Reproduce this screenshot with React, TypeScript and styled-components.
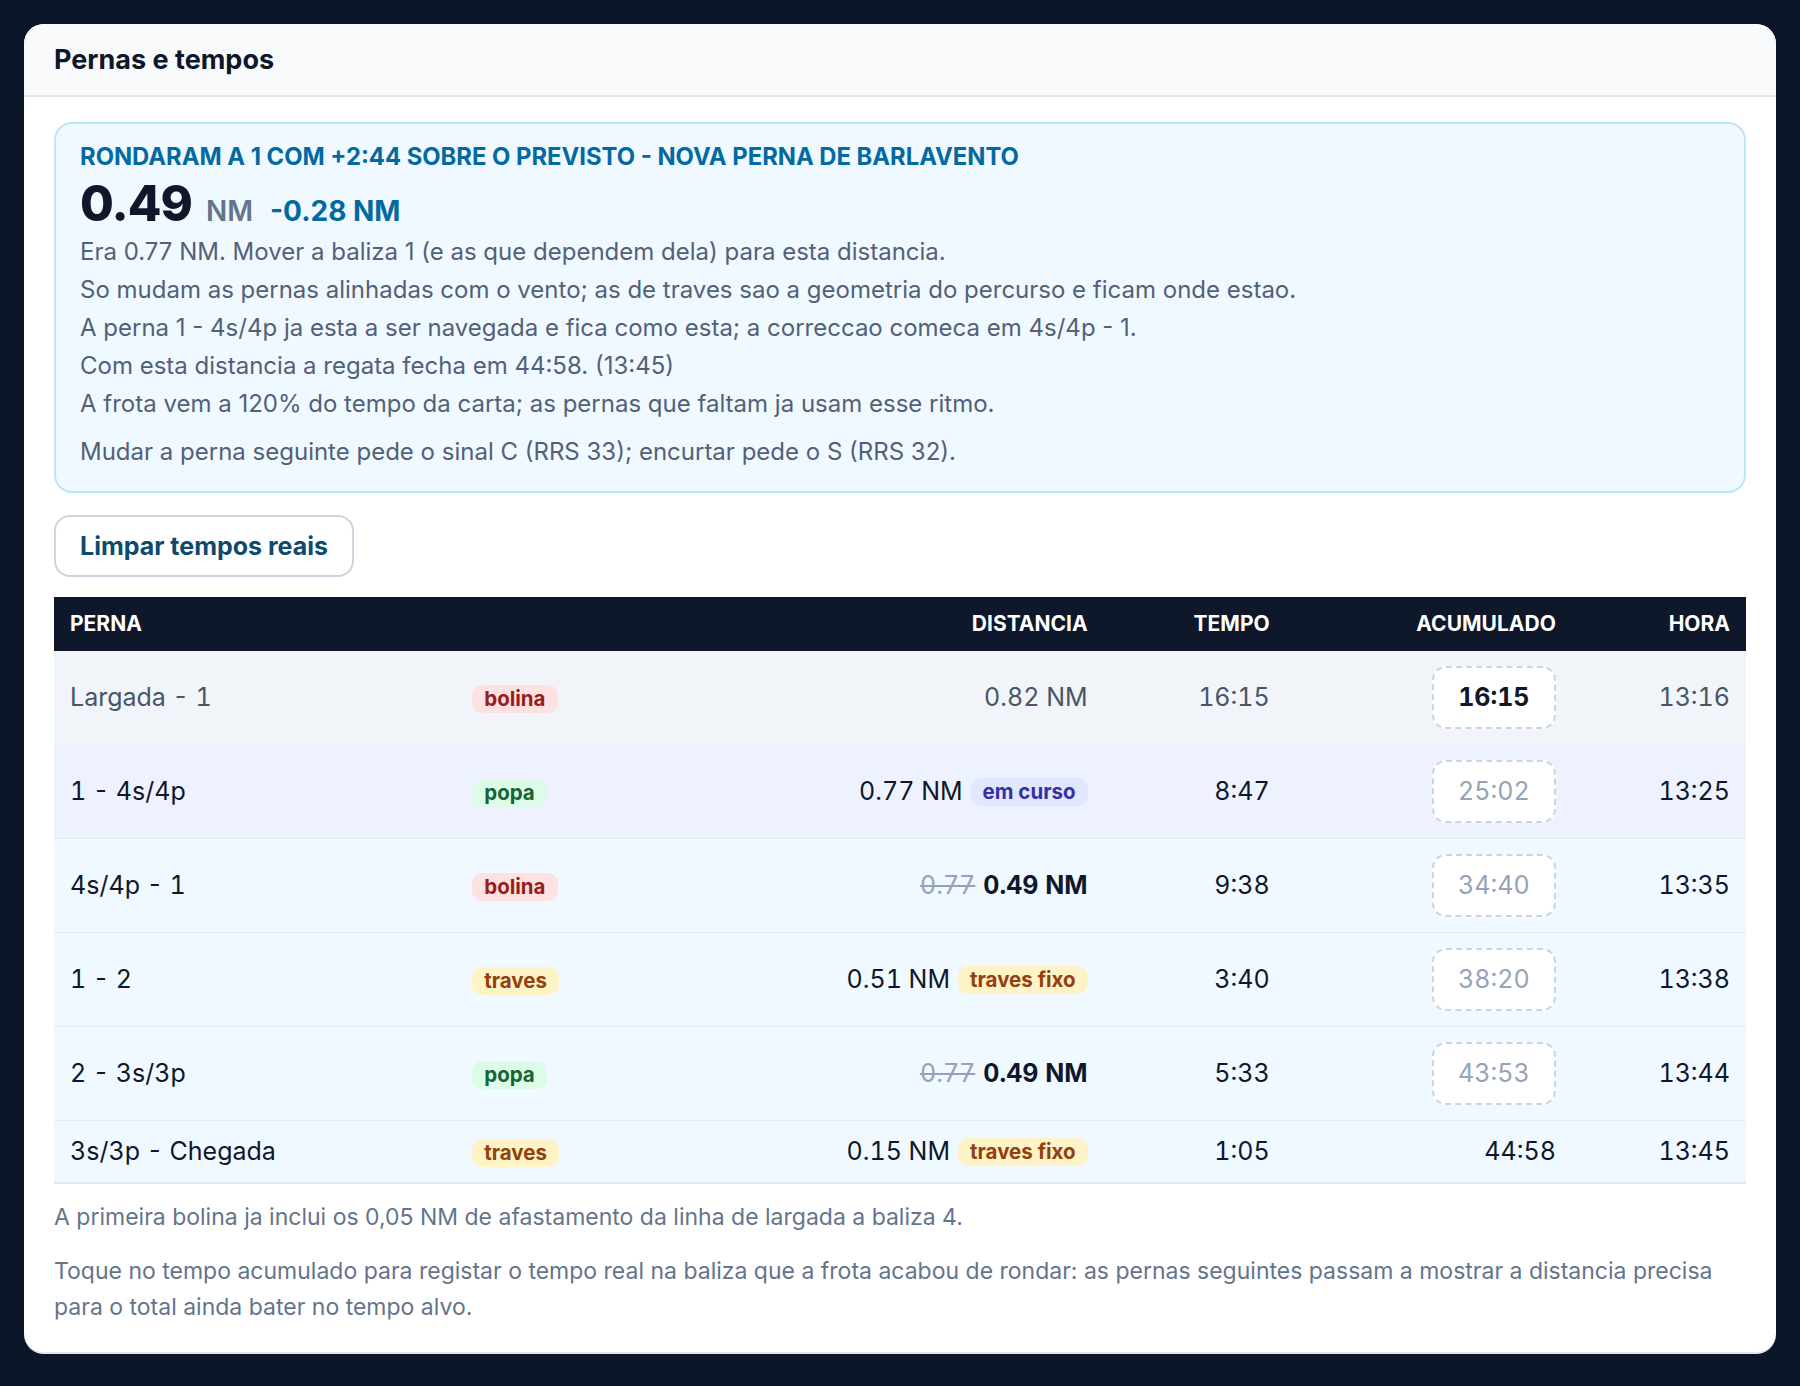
import React from 'react';
import styled, { createGlobalStyle } from 'styled-components';

const GlobalStyle = createGlobalStyle`
  * { box-sizing: border-box; }
  html, body {
    margin: 0;
    padding: 0;
    background: #0b1629;
  }
  body {
    font-family: Inter, "Noto Sans", sans-serif;
    color: #0f172a;
  }
`;

type Kind = 'bolina' | 'popa' | 'traves' | 'curso';

const tagColors: Record<Kind, { bg: string; fg: string }> = {
  bolina: { bg: '#fee2e2', fg: '#991b1b' },
  popa: { bg: '#dcfce7', fg: '#166534' },
  traves: { bg: '#fef3c7', fg: '#92400e' },
  curso: { bg: '#e0e7ff', fg: '#3730a3' },
};

type Leg = {
  name: string;
  kind: Kind;
  dist: string;
  oldDist?: string;
  note?: { text: string; kind: Kind };
  tempo: string;
  acc: string;
  hora: string;
  state: 'done' | 'current' | 'next';
  real?: boolean;
  last?: boolean;
};

const legs: Leg[] = [
  { name: 'Largada - 1', kind: 'bolina', dist: '0.82 NM', tempo: '16:15', acc: '16:15', hora: '13:16', state: 'done', real: true },
  { name: '1 - 4s/4p', kind: 'popa', dist: '0.77 NM', note: { text: 'em curso', kind: 'curso' }, tempo: '8:47', acc: '25:02', hora: '13:25', state: 'current' },
  { name: '4s/4p - 1', kind: 'bolina', dist: '0.49 NM', oldDist: '0.77', tempo: '9:38', acc: '34:40', hora: '13:35', state: 'next' },
  { name: '1 - 2', kind: 'traves', dist: '0.51 NM', note: { text: 'traves fixo', kind: 'traves' }, tempo: '3:40', acc: '38:20', hora: '13:38', state: 'next' },
  { name: '2 - 3s/3p', kind: 'popa', dist: '0.49 NM', oldDist: '0.77', tempo: '5:33', acc: '43:53', hora: '13:44', state: 'next' },
  { name: '3s/3p - Chegada', kind: 'traves', dist: '0.15 NM', note: { text: 'traves fixo', kind: 'traves' }, tempo: '1:05', acc: '44:58', hora: '13:45', state: 'next', last: true },
];

const rowBg = { done: '#f1f5f9', current: '#eef2ff', next: '#f0f9ff' };

const Page = styled.div`
  padding: 24px;
  min-height: 100vh;
`;

const Card = styled.section`
  background: #ffffff;
  border-radius: 20px;
  overflow: hidden;
  border-bottom: 2px solid #e2e8f0;
`;

const CardHeader = styled.header`
  height: 73px;
  padding: 0 30px;
  display: flex;
  align-items: center;
  background: #f8fafc;
  border-bottom: 2px solid #e2e8f0;

  h2 {
    margin: 0;
    font-size: 27px;
    font-weight: 700;
    color: #0f172a;
  }
`;

const CardBody = styled.div`
  padding: 25px 30px 27px;
`;

const Alert = styled.div`
  background: #f0f9ff;
  border: 2px solid #bae6fd;
  border-radius: 18px;
  padding: 18px 24px 20px;
`;

const AlertTitle = styled.div`
  font-size: 23.8px;
  font-weight: 700;
  color: #0369a1;
  text-transform: uppercase;
  line-height: 1.3;
`;

const BigRow = styled.div`
  display: flex;
  align-items: baseline;
  line-height: 1.1;
  margin: 4px 0 2px;
`;

const BigValue = styled.span`
  font-size: 49px;
  font-weight: 800;
  letter-spacing: -0.02em;
  color: #0f172a;
`;

const Unit = styled.span`
  font-size: 28px;
  font-weight: 600;
  color: #64748b;
  margin-left: 14px;
`;

const Delta = styled.span`
  font-size: 28px;
  font-weight: 700;
  color: #0369a1;
  margin-left: 17px;
`;

const AlertLine = styled.p<{ $gap?: boolean }>`
  margin: ${(p) => (p.$gap ? '10px' : '0')} 0 0;
  font-size: 24px;
  line-height: 38px;
  color: #526177;
`;

const ClearButton = styled.button`
  margin-top: 22px;
  height: 62px;
  padding: 0 24px;
  background: #ffffff;
  border: 2px solid #cbd5e1;
  border-radius: 16px;
  font-family: inherit;
  font-size: 25px;
  font-weight: 700;
  color: #0c4a6e;
  cursor: pointer;
`;

const Table = styled.table`
  margin-top: 20px;
  width: 100%;
  border-collapse: collapse;
  table-layout: fixed;
  font-variant-numeric: tabular-nums;
`;

const Col = styled.col<{ $w: number }>`
  width: ${(p) => p.$w}px;
`;

const HeadCell = styled.th<{ $left?: boolean }>`
  background: #0f172a;
  color: #ffffff;
  font-size: 21px;
  font-weight: 700;
  text-transform: uppercase;
  text-align: ${(p) => (p.$left ? 'left' : 'right')};
  padding: 0 16px;
  height: 54px;
`;

const Row = styled.tr<{ $state: Leg['state']; $last?: boolean }>`
  background: ${(p) => rowBg[p.$state]};
  border-top: 1px solid ${(p) => (p.$state === 'next' ? '#e2eaf3' : 'transparent')};
  border-bottom: ${(p) => (p.$last ? '2px solid #e2e8f0' : 'none')};
  color: ${(p) => (p.$state === 'done' ? '#475569' : '#0f172a')};
`;

const Cell = styled.td<{ $right?: boolean }>`
  padding: 15px 16px;
  font-size: 25px;
  line-height: 31px;
  text-align: ${(p) => (p.$right ? 'right' : 'left')};
  vertical-align: middle;
`;

const Tag = styled.span<{ $kind: Kind }>`
  display: inline-block;
  padding: 0 12px;
  height: 28px;
  line-height: 28px;
  border-radius: 10px;
  font-size: 20.5px;
  font-weight: 700;
  font-variant-numeric: normal;
  vertical-align: middle;
  background: ${(p) => tagColors[p.$kind].bg};
  color: ${(p) => tagColors[p.$kind].fg};
  white-space: nowrap;
`;

const DistWrap = styled.div`
  display: flex;
  justify-content: flex-end;
  align-items: center;
  gap: 8px;
  white-space: nowrap;
`;

const OldDist = styled.s`
  color: #94a3b8;
`;

const NewDist = styled.strong`
  font-weight: 700;
`;

const AccBox = styled.button<{ $real?: boolean }>`
  display: inline-block;
  min-width: 124px;
  padding: 14px 22px;
  background: #ffffff;
  border: 2px dashed #cbd5e1;
  border-radius: 14px;
  font-family: inherit;
  font-size: 25px;
  line-height: 31px;
  font-variant-numeric: tabular-nums;
  font-weight: ${(p) => (p.$real ? 700 : 400)};
  color: ${(p) => (p.$real ? '#0f172a' : '#94a3b8')};
  cursor: pointer;
`;

const Footer = styled.div`
  margin-top: 15px;

  p {
    margin: 0 0 18px;
    font-size: 23px;
    line-height: 36px;
    color: #64748b;
  }
  p:last-child {
    margin-bottom: 0;
  }
`;

function Distance({ leg }: { leg: Leg }) {
  return (
    <DistWrap>
      {leg.oldDist && <OldDist>{leg.oldDist}</OldDist>}
      {leg.oldDist ? <NewDist>{leg.dist}</NewDist> : <span>{leg.dist}</span>}
      {leg.note && <Tag $kind={leg.note.kind}>{leg.note.text}</Tag>}
    </DistWrap>
  );
}

export default function App() {
  return (
    <Page>
      <GlobalStyle />
      <Card>
        <CardHeader>
          <h2>Pernas e tempos</h2>
        </CardHeader>
        <CardBody>
          <Alert>
            <AlertTitle>Rondaram a 1 com +2:44 sobre o previsto - nova perna de barlavento</AlertTitle>
            <BigRow>
              <BigValue>0.49</BigValue>
              <Unit>NM</Unit>
              <Delta>-0.28 NM</Delta>
            </BigRow>
            <AlertLine>Era 0.77 NM. Mover a baliza 1 (e as que dependem dela) para esta distancia.</AlertLine>
            <AlertLine>So mudam as pernas alinhadas com o vento; as de traves sao a geometria do percurso e ficam onde estao.</AlertLine>
            <AlertLine>A perna 1 - 4s/4p ja esta a ser navegada e fica como esta; a correccao comeca em 4s/4p - 1.</AlertLine>
            <AlertLine>Com esta distancia a regata fecha em 44:58. (13:45)</AlertLine>
            <AlertLine>A frota vem a 120% do tempo da carta; as pernas que faltam ja usam esse ritmo.</AlertLine>
            <AlertLine $gap>Mudar a perna seguinte pede o sinal C (RRS 33); encurtar pede o S (RRS 32).</AlertLine>
          </Alert>

          <ClearButton>Limpar tempos reais</ClearButton>

          <Table>
            <colgroup>
              <Col $w={402} />
              <Col $w={394} />
              <Col $w={253} />
              <Col $w={182} />
              <Col $w={286} />
              <Col $w={174} />
            </colgroup>
            <thead>
              <tr>
                <HeadCell $left>Perna</HeadCell>
                <HeadCell $left></HeadCell>
                <HeadCell>Distancia</HeadCell>
                <HeadCell>Tempo</HeadCell>
                <HeadCell>Acumulado</HeadCell>
                <HeadCell>Hora</HeadCell>
              </tr>
            </thead>
            <tbody>
              {legs.map((leg) => (
                <Row key={leg.name} $state={leg.state} $last={leg.last}>
                  <Cell>{leg.name}</Cell>
                  <Cell>
                    <Tag $kind={leg.kind}>{leg.kind}</Tag>
                  </Cell>
                  <Cell $right>
                    <Distance leg={leg} />
                  </Cell>
                  <Cell $right>{leg.tempo}</Cell>
                  <Cell $right>
                    {leg.last ? leg.acc : <AccBox $real={leg.real}>{leg.acc}</AccBox>}
                  </Cell>
                  <Cell $right>{leg.hora}</Cell>
                </Row>
              ))}
            </tbody>
          </Table>

          <Footer>
            <p>A primeira bolina ja inclui os 0,05 NM de afastamento da linha de largada a baliza 4.</p>
            <p>
              Toque no tempo acumulado para registar o tempo real na baliza que a frota acabou de rondar: as pernas
              seguintes passam a mostrar a distancia precisa para o total ainda bater no tempo alvo.
            </p>
          </Footer>
        </CardBody>
      </Card>
    </Page>
  );
}
